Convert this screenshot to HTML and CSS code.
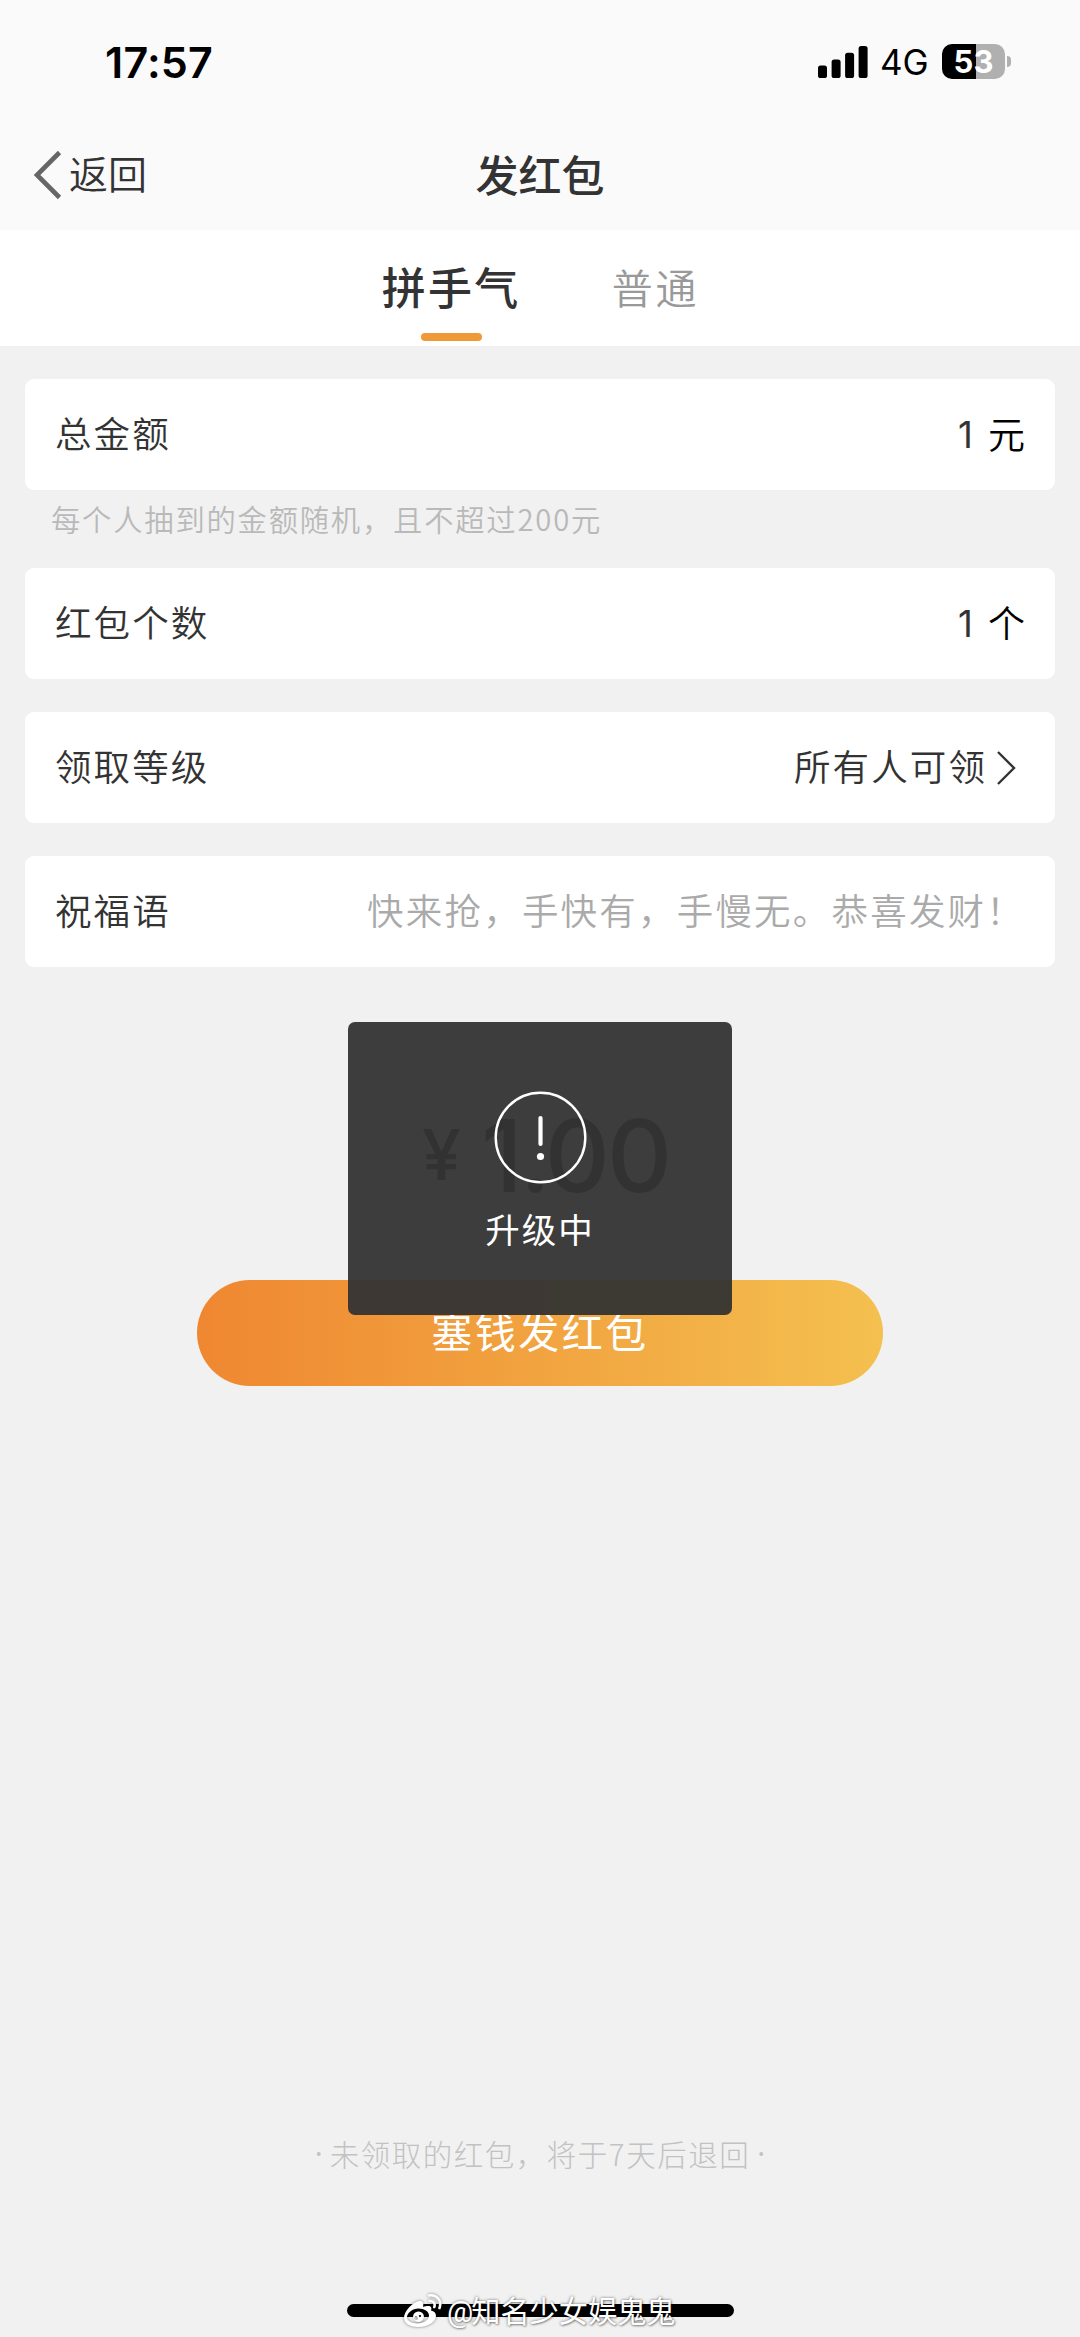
FILE: index.html
```html
<!DOCTYPE html>
<html lang="zh-CN">
<head>
<meta charset="utf-8">
<title>发红包</title>
<link rel="stylesheet" href="styles.css">
</head>
<body>
<div class="screen">
  <header class="top">
    <div class="status">
      <span class="time">17:57</span>
      <div class="status-icons">
        <svg class="signal" width="50" height="32" viewBox="0 0 50 32"><rect x="0" y="19.5" width="9" height="12.5" rx="2.6"/><rect x="13.6" y="13.5" width="9" height="18.5" rx="2.6"/><rect x="27.1" y="6.7" width="9" height="25.3" rx="2.6"/><rect x="40.6" y="0" width="9" height="32" rx="2.6"/></svg>
        <span class="network">4G</span>
        <span class="battery">53</span>
        <span class="battery-cap"></span>
      </div>
    </div>
    <nav class="navbar">
      <a class="back">
        <svg width="30" height="50" viewBox="0 0 30 50"><path d="M26.5 2.5 4 25 26.5 47.5" fill="none" stroke="#666" stroke-width="4.6"/></svg>
        <span>返回</span>
      </a>
      <h1 class="title">发红包</h1>
    </nav>
  </header>
  <div class="tabs">
    <div class="tab active">拼手气</div>
    <div class="tab">普通</div>
  </div>
  <main class="form">
    <div class="card"><span class="label">总金额</span><span class="value"><span class="num">1</span><span class="unit">元</span></span></div>
    <p class="hint">每个人抽到的金额随机，且不超过200元</p>
    <div class="card"><span class="label">红包个数</span><span class="value"><span class="num">1</span><span class="unit">个</span></span></div>
    <div class="card"><span class="label">领取等级</span><span class="value choice">所有人可领<svg width="20" height="36" viewBox="0 0 20 36"><path d="M2 2 18 18 2 34" fill="none" stroke="#333" stroke-width="2.4"/></svg></span></div>
    <div class="card"><span class="label">祝福语</span><span class="value wish">快来抢，手快有，手慢无。恭喜发财！</span></div>
  </main>
  <div class="total"><span class="yen">¥</span><span class="sum">1.00</span></div>
  <button class="submit">塞钱发红包</button>
  <footer class="foot">
    <p class="note"><span class="dot">·</span>未领取的红包，将于7天后退回<span class="dot">·</span></p>
    <div class="home-bar"></div>
  </footer>
  <div class="toast">
    <svg width="94" height="94" viewBox="0 0 94 94"><circle cx="47.500" cy="46.500" r="44.8" fill="none" stroke="#fff" stroke-width="2.4"/><path d="M47.500 27V53" stroke="#fff" stroke-width="4.2" stroke-linecap="round"/><circle cx="47.500" cy="65.500" r="3.6" fill="#fff"/></svg>
    <span>升级中</span>
  </div>
  <div class="watermark">
    <svg width="40" height="36" viewBox="0 0 40 36"><path fill="#fff" fill-rule="evenodd" d="M16 8C10 9 1 18 1 25c0 6 7 9 14 9 10 0 18-5 18-11 0-3-2-5-5-5.5 1.5-4-1-6-8-3.5C21 10 20 7.500 16 8ZM15.500 15.500c6 0 10.500 3 10.500 7s-5 8-11.500 8S4 27.500 4 24s5-8.500 11.500-8.500Z"/><path fill="#fff" fill-rule="evenodd" d="M15.500 18.500a5.400 5.200 0 1 0 .01 0ZM13 23.500a2 1.800 0 1 1-.01 0ZM17 22a1 1 0 1 1-.01 0Z"/><path fill="none" stroke="#fff" stroke-width="2.600" stroke-linecap="round" d="M26 2.500C34 1 39 8 36.500 15M26.500 8c4-.5 6 2.500 4.800 6"/></svg>
    <span><span class="at">@</span>知名少女娱鬼鬼</span>
  </div>
</div>
</body>
</html>
```
FILE: styles.css
```css
* { box-sizing: border-box; margin: 0; padding: 0; }
body { background: #f1f1f1; font-family: "Noto Sans CJK SC", sans-serif; color: #333; }
.screen { position: relative; width: 1080px; height: 2337px; overflow: hidden; display: flex; flex-direction: column; background: #f1f1f1; }

.top { height: 230px; background: #fafafa; }
.status { height: 123px; display: flex; justify-content: space-between; align-items: center; padding: 0 69px 0 105px; color: #000; font-family: Inter, sans-serif; }
.time { font-size: 43px; font-weight: 600; letter-spacing: .2px; }
.status-icons { display: flex; align-items: center; }
.network { font-size: 35px; margin-left: 12px; width: 62px; letter-spacing: -.2px; line-height: 40px; }
.battery { width: 63px; height: 35px; border-radius: 10px; background: linear-gradient(90deg, #000 34px, #b0b0b0 34px); color: #fff; font-size: 31px; font-weight: 700; line-height: 35px; text-align: center; }
.battery-cap { width: 4px; height: 11px; margin-left: 2px; border-radius: 0 5px 5px 0; background: #b0b0b0; }

.navbar { height: 104px; display: grid; grid-template-columns: 1fr auto 1fr; align-items: center; padding: 0 33px; }
.back { display: flex; align-items: center; font-size: 39px; line-height: 50px; gap: 6px; }
.back span { padding-bottom: 6px; font-weight: 350; }
.title { font-size: 43px; line-height: 60px; font-weight: 500; padding-bottom: 5px; }

.tabs { height: 116px; background: #fff; display: flex; justify-content: center; gap: 91px; padding-left: 1px; }
.tab { height: 111px; padding-top: 23px; line-height: 66px; font-size: 41px; letter-spacing: 2.800px; color: #999; font-weight: 350; }
.tab.active { display: flex; flex-direction: column; justify-content: space-between; align-items: center; font-size: 44px; letter-spacing: 2.300px; font-weight: 500; color: #333; }
.tab.active::after { content: ""; width: 61px; height: 8px; border-radius: 4px; background: #f09a37; }

.form { display: flex; flex-direction: column; gap: 33px; padding: 33px 25px 0; }
.card { height: 111px; border-radius: 9px; background: #fff; display: flex; justify-content: space-between; align-items: center; padding: 0 30px 4px; font-size: 36.500px; letter-spacing: 2.100px; line-height: 54px; font-weight: 350; }
.value { display: flex; align-items: center; }
.num { font-family: Inter, sans-serif; font-weight: 400; margin-right: 13px; padding-top: 4px; }
.unit { color: #000; letter-spacing: 0; font-size: 37px; }
.choice { padding-right: 9px; gap: 9px; }
.choice svg { margin-top: 4px; }
.wish { color: #aaa; letter-spacing: 2.200px; padding-top: 1px; }
.hint { height: 45px; margin-top: -33px; padding: 8px 0 0 26px; line-height: 40px; font-size: 29.300px; letter-spacing: 1.800px; font-weight: 350; color: #b9b9b9; }

.total { height: 313px; padding: 118px 0 0 422px; display: flex; align-items: flex-start; font-family: Inter, sans-serif; font-weight: 500; line-height: 140px; }
.yen { font-size: 70px; width: 59px; }
.sum { font-size: 101px; letter-spacing: -3px; }
.submit { width: 686px; height: 106px; align-self: center; border: 0; border-radius: 53px; padding-bottom: 6px; background: linear-gradient(90deg, #ef8731, #f4c04f); color: #fff; font: 400 41px/60px "Noto Sans CJK SC", sans-serif; letter-spacing: 2.500px; }

.foot { flex: 1; display: flex; flex-direction: column; justify-content: space-between; align-items: center; padding: 744px 0 20px; }
.note { display: flex; font-size: 29.500px; line-height: 46px; letter-spacing: 1.500px; font-weight: 300; color: #c2c2c2; }
.dot { width: 15px; font-family: "Noto Sans", sans-serif; font-weight: 400; letter-spacing: 0; }
.dot:last-child { text-align: right; }
.home-bar { width: 387px; height: 13px; border-radius: 7px; background: #000; }

.toast { position: absolute; left: 348px; top: 1022px; width: 384px; height: 293px; border-radius: 7px; background: rgba(51, 51, 51, .95); color: #fff; display: flex; flex-direction: column; align-items: center; padding-top: 69px; font-size: 34.500px; letter-spacing: 2px; line-height: 50px; gap: 18px; }
.watermark { position: absolute; left: 403px; top: 2290px; display: flex; align-items: center; gap: 4px; color: #fff; font-size: 29.200px; line-height: 38px; text-shadow: 0 0 3px rgba(0, 0, 0, .55), 1px 1px 2px rgba(0, 0, 0, .3); white-space: nowrap; }
.at { font-family: Roboto, sans-serif; margin-right: -2px; }
.watermark svg { filter: drop-shadow(0 0 1.500px rgba(0, 0, 0, .5)); }
```
